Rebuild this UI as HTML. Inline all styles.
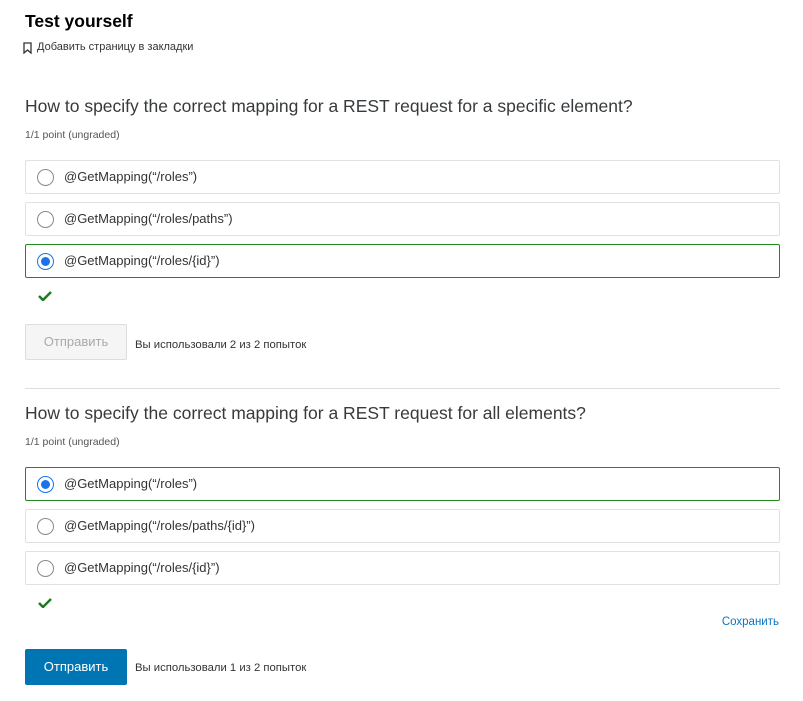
<!DOCTYPE html>
<html><head><meta charset="utf-8"><style>
body{margin:0;width:803px;height:701px;background:#fff;font-family:"Liberation Sans",sans-serif;position:relative;overflow:hidden;color:#1f1f1f}
.a{position:absolute;white-space:nowrap}
.box{position:absolute;left:25px;width:753px;border:1px solid #e1e1e1;border-radius:2px;height:32px}
.box.g{border-color:#1f8a1f}
.r{position:absolute;left:11px;top:8px;width:17px;height:17px;border:1px solid #8a8a8a;border-radius:50%;box-sizing:border-box}
.r.s{border:1.5px solid #1a73e8;}
.r.s::after{content:"";position:absolute;left:2.5px;top:2.5px;width:9px;height:9px;border-radius:50%;background:#1a73e8}
.t{position:absolute;left:38px;top:8px;font-size:13px;color:#333}
.q{font-size:17.5px;color:#373a3c}
.p{font-size:10.5px;color:#555}
.chk{position:absolute;width:14px;height:10px}
.small{font-size:11.3px;color:#333}
</style></head><body>
<div class="a" style="left:25px;top:11px;font-size:17.5px;font-weight:bold;color:#000">Test yourself</div>
<svg class="a" style="left:23px;top:42px" width="9" height="12" viewBox="0 0 9 12"><path d="M1 1h7v10L4.5 8 1 11z" fill="none" stroke="#333" stroke-width="1.3"/></svg>
<div class="a small" style="left:37px;top:41px;font-size:11px">Добавить страницу в закладки</div>

<div class="a q" style="left:25px;top:96px">How to specify the correct mapping for a REST request for a specific element?</div>
<div class="a p" style="left:25px;top:129px">1/1 point (ungraded)</div>
<div class="box" style="top:160px"><div class="r"></div><div class="t">@GetMapping(“/roles”)</div></div>
<div class="box" style="top:202px"><div class="r"></div><div class="t">@GetMapping(“/roles/paths”)</div></div>
<div class="box g" style="top:244px"><div class="r s"></div><div class="t">@GetMapping(“/roles/{id}”)</div></div>
<svg class="chk" style="left:38px;top:291px" viewBox="0 0 14 10"><path d="M1 5l4 4 8-8" fill="none" stroke="#1f7a1f" stroke-width="2.5"/></svg>
<div class="a" style="left:25px;top:324px;width:100px;height:34px;border:1px solid #ddd;border-radius:2px;background:#f5f5f5;color:#aaa;font-size:13px;text-align:center;line-height:34px">Отправить</div>
<div class="a small" style="left:135px;top:339px">Вы использовали 2 из 2 попыток</div>

<div class="a" style="left:25px;top:388px;width:755px;height:1px;background:#ddd"></div>

<div class="a q" style="left:25px;top:403px">How to specify the correct mapping for a REST request for all elements?</div>
<div class="a p" style="left:25px;top:436px">1/1 point (ungraded)</div>
<div class="box g" style="top:467px"><div class="r s"></div><div class="t">@GetMapping(“/roles”)</div></div>
<div class="box" style="top:509px"><div class="r"></div><div class="t">@GetMapping(“/roles/paths/{id}”)</div></div>
<div class="box" style="top:551px"><div class="r"></div><div class="t">@GetMapping(“/roles/{id}”)</div></div>
<svg class="chk" style="left:38px;top:598px" viewBox="0 0 14 10"><path d="M1 5l4 4 8-8" fill="none" stroke="#1f7a1f" stroke-width="2.5"/></svg>
<div class="a" style="right:24px;top:616px;font-size:11.5px;color:#0a75c2">Сохранить</div>
<div class="a" style="left:25px;top:649px;width:102px;height:36px;border-radius:2px;background:#0075b4;color:#fff;font-size:13px;text-align:center;line-height:36px">Отправить</div>
<div class="a small" style="left:135px;top:662px">Вы использовали 1 из 2 попыток</div>
</body></html>
